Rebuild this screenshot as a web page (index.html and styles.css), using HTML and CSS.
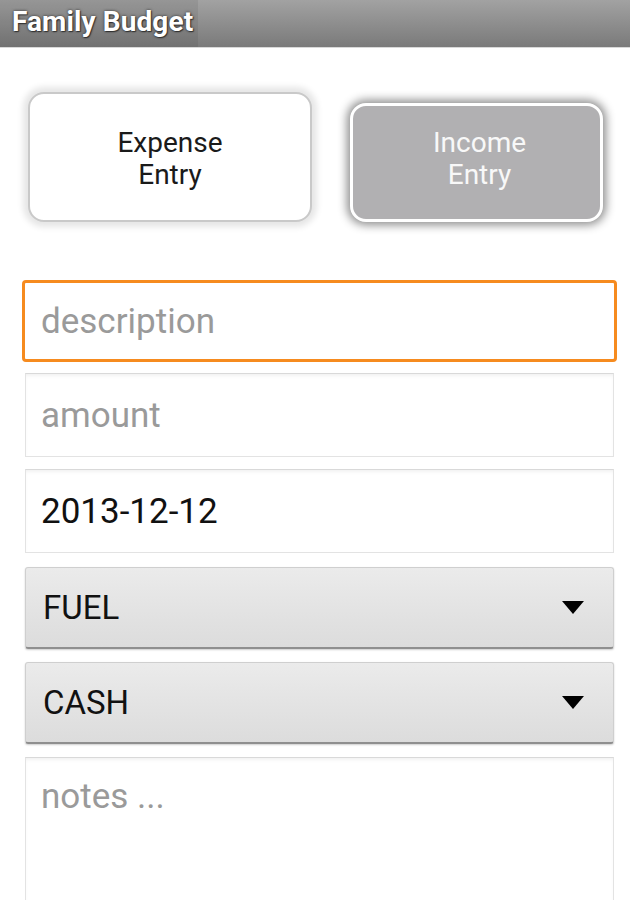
FILE: index.html
```html
<!DOCTYPE html>
<html lang="en">
<head>
  <meta charset="UTF-8" />
  <meta name="viewport" content="width=device-width, initial-scale=1.0" />
  <title>Family Budget</title>
  <link rel="stylesheet" href="styles.css">
</head>
<body>
  <header class="titlebar"><span class="title">Family Budget</span></header>
  <main>
    <div class="toggles">
      <button class="toggle expense">Expense<br>Entry</button>
      <button class="toggle income">Income<br>Entry</button>
    </div>

    <form class="entry">
      <input class="field focused" type="text" placeholder="description" />
      <input class="field amount" type="text" placeholder="amount" />
      <input class="field date" type="text" value="2013-12-12" />
      <div class="spinner fuel">
        <span>FUEL</span>
        <svg width="22" height="13" viewBox="0 0 22 13"><path d="M0 0H22L11 13Z" fill="#000"/></svg>
      </div>
      <div class="spinner cash">
        <span>CASH</span>
        <svg width="22" height="13" viewBox="0 0 22 13"><path d="M0 0H22L11 13Z" fill="#000"/></svg>
      </div>
      <textarea class="field notes" placeholder="notes ..."></textarea>
    </form>
  </main>
</body>
</html>
```

FILE: styles.css
```css
* { margin: 0; padding: 0; box-sizing: border-box; }
body {
  font-family: Roboto, 'Noto Sans', sans-serif;
  background: #fff;
  width: 630px;
  height: 900px;
  overflow: hidden;
}
.titlebar {
  height: 48px;
  background: linear-gradient(#a2a2a2, #8a8a8a 60%, #7a7a7a);
  border-bottom: 1px solid #d8d8d8;
  display: flex;
  align-items: stretch;
}
.title {
  display: flex;
  align-items: center;
  padding: 0 5px 4px 12px;
  background: rgba(0, 0, 0, 0.07);
  color: #fff;
  font-size: 28px;
  font-weight: bold;
  letter-spacing: 0.1px;
  text-shadow: 0 0 3px rgba(0, 0, 0, 0.7), 1px 1px 1px rgba(0, 0, 0, 0.5);
}
.toggles {
  display: flex;
  align-items: flex-end;
  gap: 38px;
  padding: 44px 0 0 28px;
}
.toggle {
  font-family: Roboto, sans-serif;
  font-size: 28px;
  line-height: 32px;
  border-radius: 16px;
  cursor: pointer;
}
.expense {
  width: 284px;
  height: 130px;
  padding-top: 3px;
  background: #fff;
  color: #1a1a1a;
  border: 2px solid #c9c9c9;
  box-shadow: 0 0 6px 5px rgba(0, 0, 0, 0.1);
}
.income {
  width: 253px;
  height: 119px;
  padding: 0 0 7px 6px;
  background: #b1b0b2;
  color: #f8f8f8;
  border: 3px solid #fff;
  box-shadow: 0 0 10px 3px rgba(0, 0, 0, 0.45);
}
.entry {
  display: flex;
  flex-direction: column;
  margin: 58px 0 0 25px;
  width: 589px;
}
.field {
  display: block;
  width: 100%;
  height: 84px;
  padding: 0 15px;
  border: 1px solid #e3e3e3;
  border-top-color: #d9d9d9;
  background: #fff;
  box-shadow: inset 0 3px 4px -2px rgba(0, 0, 0, 0.08);
  font-family: Roboto, sans-serif;
  font-size: 35px;
  color: #111;
  outline: none;
}
.field::placeholder { color: #9a9a9a; }
.focused {
  width: 595px;
  height: 82px;
  margin-left: -3px;
  padding-left: 16px;
  border: 3px solid #f68b1f;
  border-radius: 4px;
  box-shadow: none;
}
.amount { margin-top: 11px; }
.date { margin-top: 12px; }
.spinner {
  display: flex;
  align-items: center;
  justify-content: space-between;
  height: 82px;
  padding: 0 29px 0 17px;
  background: linear-gradient(#ebebeb, #dcdcdc);
  border: 1px solid #cfcfcf;
  border-bottom: 2px solid #8f8f8f;
  border-radius: 3px;
  box-shadow: 0 1px 2px rgba(0, 0, 0, 0.2);
  font-size: 33px;
  color: #111;
}
.fuel { margin-top: 14px; }
.cash { margin-top: 13px; }
.notes {
  margin-top: 13px;
  height: 150px;
  padding-top: 18px;
  resize: none;
  border-bottom: none;
  line-height: 42px;
}
```
